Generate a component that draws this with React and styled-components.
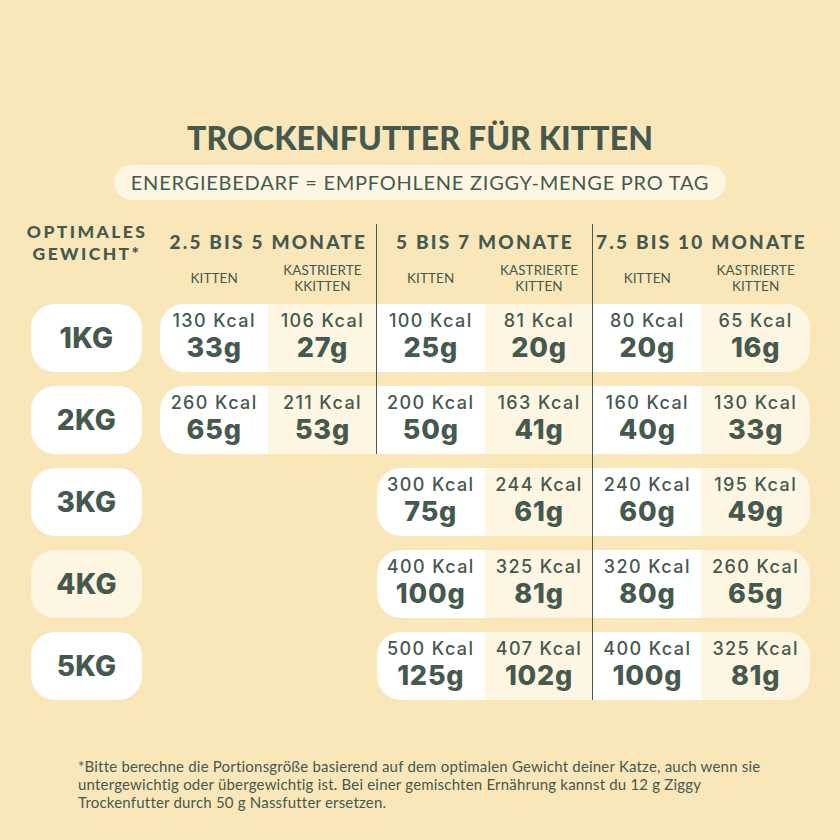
import React from 'react';
import styled, { createGlobalStyle } from 'styled-components';

const GlobalStyle = createGlobalStyle`
  html, body {
    margin: 0;
    padding: 0;
    background: #f9e7ba;
  }
  body {
    font-family: "Lato", "Noto Sans", sans-serif;
    color: #45594f;
  }
`

const groups = [
  { title: '2.5 BIS 5 MONATE', labels: [['KITTEN'], ['KASTRIERTE', 'KKITTEN']] },
  { title: '5 BIS 7 MONATE', labels: [['KITTEN'], ['KASTRIERTE', 'KITTEN']] },
  { title: '7.5 BIS 10 MONATE', labels: [['KITTEN'], ['KASTRIERTE', 'KITTEN']] },
];

const rows = [
  { weight: '1KG', from: 2, cells: [['130', '33'], ['106', '27'], ['100', '25'], ['81', '20'], ['80', '20'], ['65', '16']] },
  { weight: '2KG', from: 2, cells: [['260', '65'], ['211', '53'], ['200', '50'], ['163', '41'], ['160', '40'], ['130', '33']] },
  { weight: '3KG', from: 4, cells: [['300', '75'], ['244', '61'], ['240', '60'], ['195', '49']] },
  { weight: '4KG', from: 4, light: true, cells: [['400', '100'], ['325', '81'], ['320', '80'], ['260', '65']] },
  { weight: '5KG', from: 4, cells: [['500', '125'], ['407', '102'], ['400', '100'], ['325', '81']] },
];

const App = () => {
  return (
    <Page>
      <GlobalStyle />
      <Title>TROCKENFUTTER FÜR KITTEN</Title>
      <SubtitleWrap>
        <Subtitle>ENERGIEBEDARF = EMPFOHLENE ZIGGY-MENGE PRO TAG</Subtitle>
      </SubtitleWrap>

      <Table>
        <WeightHeading>OPTIMALES<br />GEWICHT*</WeightHeading>
        {groups.map((g, gi) => (
          <GroupHead key={g.title} col={2 + gi * 2}>
            <GroupTitle>{g.title}</GroupTitle>
            {g.labels.map((l, i) => (
              <SubLabel key={i}>
                {l.map((line, j) => <span key={j}>{line}</span>)}
              </SubLabel>
            ))}
          </GroupHead>
        ))}

        {rows.map((r, ri) => (
          <React.Fragment key={r.weight}>
            <Weight row={ri + 2} light={r.light}>{r.weight}</Weight>
            <DataRow row={ri + 2} from={r.from} count={r.cells.length}>
              {r.cells.map(([kcal, grams], i) => (
                <Cell key={i} light={i % 2 === 1}>
                  <Kcal>{kcal} Kcal</Kcal>
                  <Grams>{grams}g</Grams>
                </Cell>
              ))}
            </DataRow>
          </React.Fragment>
        ))}

        <Divider col={4} rowEnd={4} />
        <Divider col={6} rowEnd={7} />
      </Table>

      <Footnote>
        *Bitte berechne die Portionsgröße basierend auf dem optimalen Gewicht deiner Katze, auch wenn sie<br />
        untergewichtig oder übergewichtig ist. Bei einer gemischten Ernährung kannst du 12 g Ziggy<br />
        Trockenfutter durch 50 g Nassfutter ersetzen.
      </Footnote>
    </Page>
  )
}

export default App;


const Page = styled.div`
  width: 840px;
  height: 840px;
  box-sizing: border-box;
  padding-top: 119px;
  overflow: hidden;
`

const Title = styled.h1`
  margin: 0;
  text-align: center;
  font-family: "Lato", sans-serif;
  font-weight: 900;
  font-size: 32px;
  line-height: 38px;
  letter-spacing: 0.1px;
  color: #45594f;
`

const SubtitleWrap = styled.div`
  display: flex;
  justify-content: center;
  margin-top: 8px;
`

const Subtitle = styled.div`
  background: #fdf6e3;
  border-radius: 18px;
  padding: 0 17px;
  height: 35px;
  line-height: 35px;
  font-size: 20px;
  font-weight: 400;
  letter-spacing: 0.75px;
  color: #45594f;
`

const Table = styled.div`
  display: grid;
  grid-template-columns: 160px repeat(6, 108.3px);
  grid-template-rows: 70px repeat(5, 68px);
  row-gap: 14px;
  margin-top: 20px;
`

const WeightHeading = styled.div`
  grid-column: 1;
  grid-row: 1;
  padding-left: 14px;
  text-align: center;
  font-weight: 900;
  font-size: 17.5px;
  line-height: 22px;
  letter-spacing: 2.4px;
  margin-top: 1px;
  white-space: nowrap;
`

const GroupHead = styled.div`
  grid-column: ${props => props.col} / span 2;
  grid-row: 1;
  display: grid;
  grid-template-columns: 1fr 1fr;
  grid-template-rows: 38px 1fr;
`

const GroupTitle = styled.div`
  grid-column: 1 / 3;
  text-align: center;
  font-weight: 900;
  font-size: 19px;
  line-height: 20px;
  letter-spacing: 2.2px;
  padding-top: 12px;
  white-space: nowrap;
`

const SubLabel = styled.div`
  display: flex;
  flex-direction: column;
  align-items: center;
  justify-content: center;
  font-size: 13.5px;
  line-height: 16px;
  letter-spacing: 0.1px;
  padding-top: 4px;
`

const Weight = styled.div`
  grid-column: 1;
  grid-row: ${props => props.row};
  margin-left: 31px;
  width: 111px;
  border-radius: 24px;
  background: ${props => props.light ? '#fdf6e3' : '#ffffff'};
  display: flex;
  align-items: center;
  justify-content: center;
  font-family: "Inter", sans-serif;
  font-weight: 800;
  font-size: 28px;
  letter-spacing: 0.3px;
`

const DataRow = styled.div`
  grid-column: ${props => props.from} / 8;
  grid-row: ${props => props.row};
  display: grid;
  grid-template-columns: repeat(${props => props.count}, 1fr);
  border-radius: 24px;
  overflow: hidden;
`

const Cell = styled.div`
  background: ${props => props.light ? '#fdf6e3' : '#ffffff'};
  display: flex;
  flex-direction: column;
  align-items: center;
  justify-content: center;
  padding-bottom: 2px;
`

const Kcal = styled.div`
  font-family: "Inter", sans-serif;
  font-weight: 500;
  font-size: 18px;
  line-height: 22px;
  letter-spacing: 1.4px;
  white-space: nowrap;
`

const Grams = styled.div`
  font-family: "Inter", sans-serif;
  font-weight: 800;
  font-size: 27px;
  line-height: 32px;
  letter-spacing: 0.8px;
`

const Divider = styled.div`
  grid-column: ${props => props.col};
  grid-row: 1 / ${props => props.rowEnd};
  justify-self: start;
  width: 0;
  margin-left: -1px;
  margin-top: 4px;
  border-left: 1.5px solid #45594f;
  z-index: 1;
  pointer-events: none;
`

const Footnote = styled.p`
  margin: 57px 0 0 78px;
  font-size: 15px;
  line-height: 18px;
  letter-spacing: 0.2px;
  color: #45594f;
`
